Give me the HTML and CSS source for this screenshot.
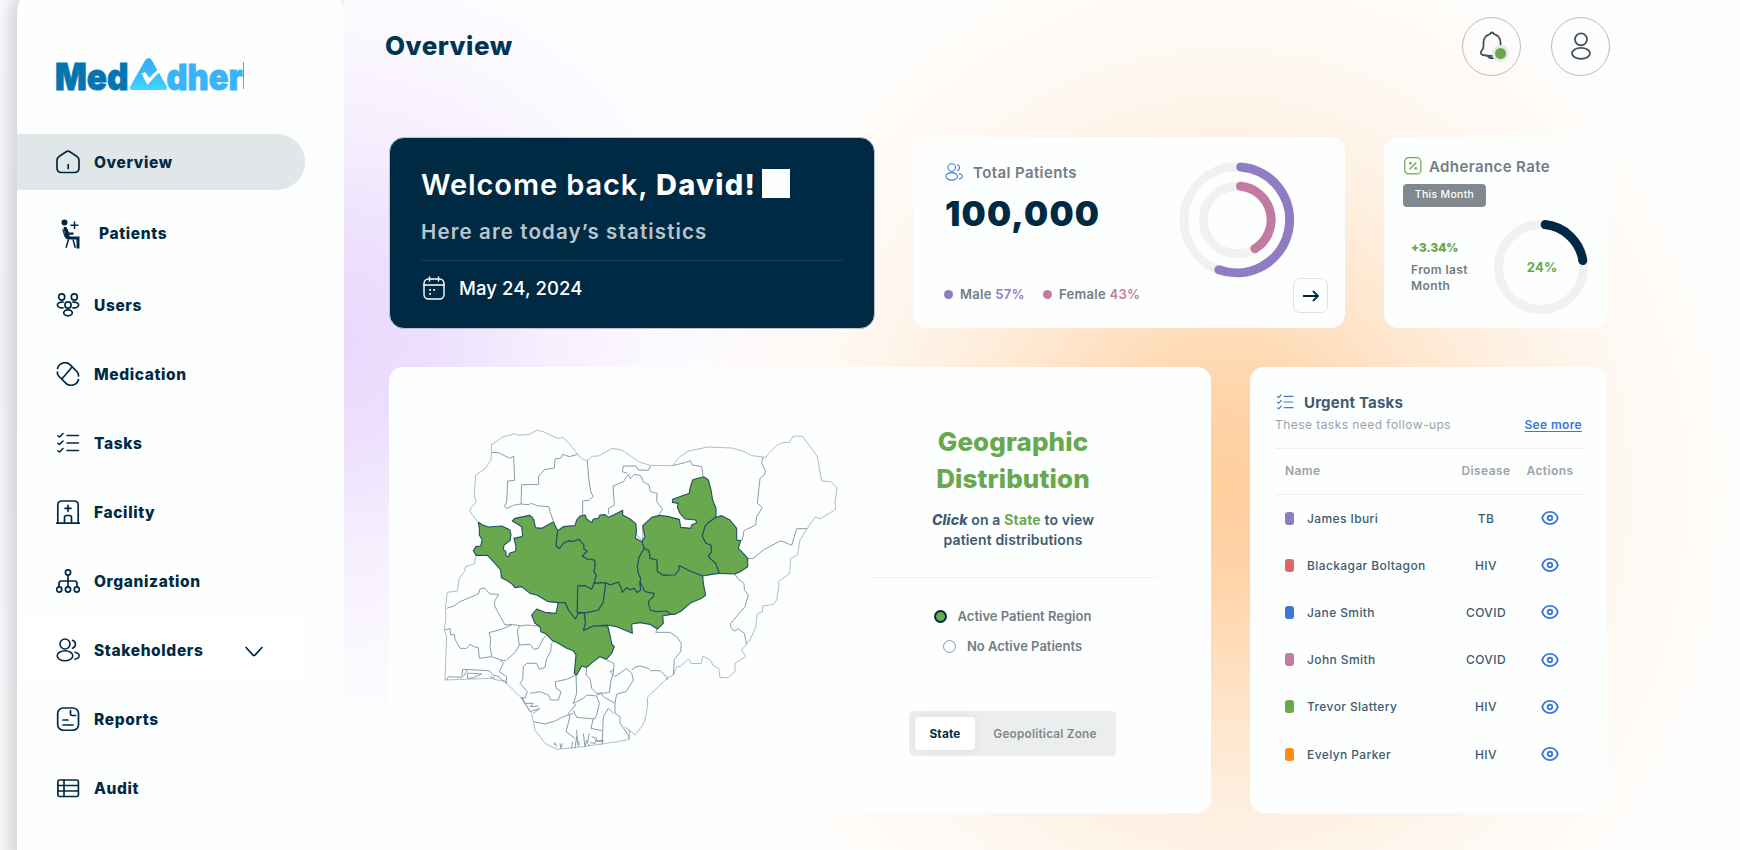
FILE: index.html
```html
<!DOCTYPE html>
<html lang="en">
<head>
<meta charset="utf-8">
<title>MedAdher – Overview</title>
<link rel="stylesheet" href="styles.css">
</head>
<body>
<svg width="0" height="0" class="defs">
  <symbol id="people" viewBox="0 0 24 24"><g fill="none" stroke="currentColor" stroke-linecap="round"><circle cx="9" cy="6" r="5"/><ellipse cx="9" cy="17.8" rx="7.8" ry="5"/><path d="M16.5 2.2a4.2 4.2 0 0 1 0 8M19 14.2c5.500 1.200 5.500 5.800 0 7"/></g></symbol>
  <symbol id="checks" viewBox="0 0 24 24"><g fill="none" stroke="currentColor" stroke-linecap="round" stroke-linejoin="round"><path d="M11 4.500h11.500M11 12h11.500M11 19.500h11.500M2 4.800l1.500 1.200L7 2.500M2 12.300l1.500 1.200L7 10M2 19.800l1.500 1.200L7 17.500"/></g></symbol>
  <symbol id="eye" viewBox="0 0 18 16"><g fill="none" stroke="currentColor" stroke-width="1.900"><path d="M1.200 8C2.500 4 5.500 1.900 9 1.900S15.500 4 16.800 8C15.500 12 12.500 14.100 9 14.100S2.500 12 1.200 8z"/><circle cx="9" cy="8" r="2.200"/></g></symbol>
</svg>
<div class="app">
  <aside class="sidebar">
    <svg class="logo" width="200" height="58" viewBox="-4 -10 200 58">
      <defs><linearGradient id="peak" x1="0" y1="0" x2="0" y2="1"><stop offset="0" stop-color="#36abf3"/><stop offset=".6" stop-color="#3cbdfa"/><stop offset="1" stop-color="#42d8ff"/></linearGradient></defs>
      <text x="-1" y="32.500" font-size="37" textLength="73.500" lengthAdjust="spacingAndGlyphs" class="logo-med">Med</text>
      <path d="M92.500 1q2 0 3.300 2.300L110.500 29q2 4-2 4H76.500q-4 0-2-4L89 3.500Q90.500 1 92.500 1z" fill="url(#peak)"/>
      <path d="M85.500 16.500l3.500-1.500 4.500 6q7-9 17.500-12-10 7.500-19.500 19z" fill="#fff"/>
      <text x="110.500" y="32.500" font-size="36" textLength="76" lengthAdjust="spacingAndGlyphs" class="logo-dher">dher</text>
      <path d="M187.500 5v27" stroke="#6fa3c4"/>
    </svg>
    <nav class="nav">
      <a class="item active"><svg width="24" height="24" viewBox="0 0 24 24"><path class="ln" d="M10.200 1.700 3.300 6.200Q1 7.800 1 10.500V18q0 4.500 4.500 4.500h13Q23 22.500 23 18v-7.500q0-2.700-2.300-4.300l-6.900-4.500q-1.800-1.200-3.600 0zM12.200 14.500v4"/></svg>Overview</a>
      <a class="item patients"><svg width="24" height="30" viewBox="0 0 24 30"><circle cx="8.500" cy="3.500" r="3" fill="#002a43"/><path d="M6.700 10 9 17.500l2 2h5" fill="none" stroke="#002a43" stroke-width="1.200"/><path d="M7.500 8.500q2-1.500 3.500.5l2 4.500h4.500v2.200H13l1 1.800h9.500V29.500h-3v-9H11.500Q10 20 9.500 18z" fill="#002a43"/><path d="M18.500 2.500v7.500M14.500 6.200h8M12.500 20.500 10 28.800M17 20.500l2.300 8.300" stroke="#002a43" stroke-width="1.500" fill="none"/></svg>Patients</a>
      <a class="item"><svg width="24" height="24" viewBox="0 0 24 24"><g class="ln"><ellipse cx="5.700" cy="4" rx="3" ry="3.200"/><ellipse cx="18.300" cy="4" rx="3" ry="3.200"/><circle cx="12" cy="12" r="3.100"/><ellipse cx="12" cy="19.800" rx="4.300" ry="3"/><path d="M7 9.200C-.5 8.500-.5 15.500 7 14.800M17 9.200c7.500-.7 7.500 6.300 0 5.600"/></g></svg>Users</a>
      <a class="item"><svg width="24" height="24" viewBox="0 0 24 24"><g class="ln"><path d="M1.500 6.500C3 .5 10.500-1 14 2.700L21.300 10q1.500 2 1.200 4M22.500 17.500C21 23.500 13.500 25 10 21.300L2.700 14Q1 12 1.500 10M16 5 6.500 16.200"/></g></svg>Medication</a>
      <a class="item"><svg width="24" height="24"><use href="#checks" class="w14"/></svg>Tasks</a>
      <a class="item"><svg width="24" height="24" viewBox="0 0 24 24"><g class="ln"><path d="M.5 23.200h23M1.800 23V5q0-4 4-4h12.400q4 0 4 4v18M8.500 23v-5.500q0-2 2-2h3q2 0 2 2V23M12 5.300v6M9 8.300h6"/></g></svg>Facility</a>
      <a class="item"><svg width="24" height="24" viewBox="0 0 24 24"><g class="ln"><circle cx="12" cy="3.500" r="2.600"/><circle cx="3.200" cy="20.500" r="2.600"/><circle cx="12" cy="20.500" r="2.600"/><circle cx="20.800" cy="20.500" r="2.600"/><path d="M12 6v12M3 18v-3.500Q3 12 5.500 12h13q2.500 0 2.500 2.500V18"/></g></svg>Organization</a>
      <a class="item light"><svg width="24" height="24"><use href="#people" class="w14"/></svg>Stakeholders<svg class="chev" width="18" height="11" viewBox="0 0 18 11"><path class="ln" d="M1 1.500 7.800 8.800q1.200 1.200 2.400 0L17 1.500"/></svg></a>
      <a class="item"><svg width="24" height="24" viewBox="0 0 24 24"><g class="ln"><rect x="1.700" y="1" width="20.800" height="22.300" rx="5.500"/><path d="M14.500 3.500V7q0 1.500 1.500 1.500h3.500M7 13h5M7 18h10"/></g></svg>Reports</a>
      <a class="item"><svg width="24" height="24" viewBox="0 0 24 24"><g class="ln"><rect x="1.900" y="4" width="20.500" height="16.500" rx="1.500"/><path d="M8 4v16.500M2 9.500h20M2 15h20"/></g></svg>Audit</a>
    </nav>
  </aside>

  <main class="main">
    <header class="top">
      <h1>Overview</h1>
      <div class="round"><svg width="28" height="30" viewBox="0 0 28 30"><path class="dk" d="M14 1.500q1.500 0 1.700 1.300C20 4 22.500 7 22.500 11.500V15q0 2.500 1.700 4.500c1.700 2.200 1.300 4-1.200 4.500-6 1.200-12 1.200-18 0-2.500-.5-2.900-2.300-1.200-4.500Q5.500 17.500 5.500 15v-3.500C5.500 7 8 4 12.300 2.800Q12.500 1.500 14 1.500zM9.500 25q4.500 4.500 9 0"/></svg><i class="badge"></i></div>
      <div class="round"><svg width="22" height="30" viewBox="0 0 22 30"><circle class="dk" cx="11" cy="8.300" r="6"/><ellipse class="dk" cx="11" cy="22.300" rx="9" ry="5.500"/></svg></div>
    </header>

    <div class="row one">
      <section class="hero">
        <div class="welcome"><span>Welcome back, </span><b>David!</b><i class="box"></i></div>
        <div class="stats">Here are today’s statistics</div>
        <div class="date"><svg width="22" height="24" viewBox="0 0 22 24"><g fill="none" stroke="#fff" stroke-width="1.400" stroke-linecap="round"><rect x="1" y="3" width="20" height="20" rx="4.500"/><path d="M1 9h20M6.500 1v4M15.500 1v4"/></g><path d="M6.300 13h1.700v1.700H6.300zM10.300 13H12v1.700h-1.700zM6.300 17H8v1.700H6.300z" fill="#fff"/></svg>May 24, 2024</div>
      </section>

      <section class="card total">
        <div class="total-info">
          <div class="label"><svg width="18" height="18"><use href="#people" class="w12"/></svg>Total Patients</div>
          <div class="big">100,000</div>
          <div class="legend"><i class="dot purple"></i><span>Male <em class="c-purple">57%</em></span><i class="dot pink"></i><span>Female <em class="c-pink">43%</em></span></div>
        </div>
        <svg class="rings" width="116" height="116" viewBox="-58 -58 116 116" fill="none" stroke-width="9" stroke-linecap="round">
          <circle r="53" stroke="#f0f1f1"/><circle r="33.700" stroke="#f0f1f1"/>
          <path d="M3.700-53A53 53 0 1 1-18.100 49.800" stroke="#8f7cc3"/>
          <path d="M3.500-33.700A33.700 33.700 0 0 1 17.900 28.700" stroke="#c27ba0"/>
        </svg>
        <div class="go"><svg width="16" height="12" viewBox="0 0 16 12"><path d="M0 6h15M10 1l5 5-5 5" fill="none" stroke="#002a43" stroke-width="1.900"/></svg></div>
      </section>

      <section class="card rate">
        <div class="label"><svg width="18" height="18" viewBox="0 0 18 18"><g fill="none" stroke="#6aa84f" stroke-width="1.200"><rect x=".7" y=".7" width="16.200" height="16.200" rx="4"/><path d="M12.200 5.500 5.600 12.300" stroke-width="1.300"/></g><circle cx="6.300" cy="6.300" r="1.300" fill="#6aa84f"/><circle cx="11.700" cy="11.300" r="1.300" fill="#6aa84f"/></svg>Adherance Rate</div>
        <div class="month">This Month</div>
        <div class="rate-body">
          <div class="delta"><b>+3.34%</b><span>From last<br>Month</span></div>
          <div class="gauge">
            <svg width="94" height="94" viewBox="-47 -47 94 94" fill="none" stroke-width="9"><circle r="42.500" stroke="#f0f1f1"/><path d="M4.200-42.400A42.500 42.500 0 0 1 41.800-6.500" stroke="#002a43" stroke-linecap="round"/></svg>
            <b>24%</b>
          </div>
        </div>
      </section>
    </div>

    <div class="row two">
      <section class="card geo">
        <svg class="map" width="420" height="340" viewBox="0 0 1260 1020">
          <g class="outer">
            <path d="M145 307 120 275 124 262 139 245 133 230 137 165 165 147 183 120 185 72 195 68 215 52 255 41 265 46 298 43 320 31 340 35 382 55 400 53 420 73 443 103 457 118 472 121 487 109 505 108 546 85 575 90 605 110 630 127 662 136 727 137 750 110 775 93 835 81 905 84 940 94 965 107 1007 112 1020 97 1042 75 1058 68 1078 67 1090 48 1118 49 1162 110 1175 183 1203 185 1221 204 1215 245 1217 268 1172 296 1155 292 1130 328 1110 360 1102 405 1082 415 1079 460 1045 485 1047 495 1040 540 1030 553 998 558 997 576 982 580 977 622 960 660 935 690 947 710 915 730 915 755 895 773 870 773 866 745 848 735 843 722 818 708 814 730 783 731 776 717 750 740 740 740 730 765 712 774 690 795 652 832 653 855 645 900 637 917 615 945 598 930M138 406 133 432 107 440 103 455 88 475 82 513 52 517 46 565 48 590 43 630 50 650 45 780 180 775 225 785 270 830 305 880 315 930 345 970 380 988 460 980 560 965 590 960 600 950 598 930"/>
          </g>
          <g class="inner">
            <path d="M185 97 205 98 240 115 251 108 254 181 233 183 230 245 224 258 230 266 250 256 272 252 295 254 305 250 320 257 357 260 360 275 372 308M443 103 418 110 398 103 393 114 375 117 373 144 343 149 326 168 326 193 275 194 273 252M472 121 476 175 482 213 489 230 478 240 458 243 458 285M535 284 536 265 553 255 549 198 580 185 595 163 601 176 612 163 632 167 640 185 657 195 661 215 681 220 680 245 698 268 685 286M662 137 655 151 625 150 618 138 580 138 577 155 592 160M727 137 765 128 780 122 787 135 815 140 820 171M998 112 995 130 1006 152 1003 165 990 175 982 250 997 263 980 290 977 315 942 332 937 360 927 362M953 415 970 415 1000 390 1050 363 1065 367 1085 376 1100 326 1132 326M915 462 922 475 942 490 943 510 955 525 945 560 902 610 902 620 913 634 925 626 943 640 950 672M682 627 677 637 720 637 740 650 754 670 752 695 733 718 730 765M617 310 620 345 637 362 639 345 638 320"/>
            <g transform="translate(0 480)">
              <path d="M50 85 72 78 90 65 145 42 150 27 163 24 180 42 206 43 193 65 195 80 225 135 247 133 270 138 290 135 320 138 330 140M45 150 60 145 62 165 73 163 75 178 90 205 110 205 120 193 132 200 145 203 148 235 185 230 212 240 228 242M185 228 180 200 182 175 177 158 215 148 245 135M270 138 262 150 268 195 255 218 230 240M268 195 300 193 312 208 325 205 340 175 350 165M372 182 364 190 362 215 350 235 345 262 328 268 320 250 290 250 280 260 278 300 270 310 292 335 285 355 275 352M300 340 330 335 355 345 362 360 385 360 393 335 378 325 376 305 410 298 438 285M50 300 55 290 95 292 98 268 178 272 188 285 207 290 215 300 228 305M112 280 113 295 130 293 155 282 130 280zM212 240 220 250 208 275 230 290 228 312M275 352 285 370 310 370 300 380 325 378M275 352 300 395 330 385 310 400M312 425 345 432 375 423 400 410 430 400M438 285 440 340 430 370 437 375 415 400 420 410 408 455 435 475M430 370 460 355 470 345 500 348 508 370 500 405 493 417 440 412 430 390M470 262 468 285 480 295 485 325 500 340 538 338 543 300 550 280 552 250 515 233M552 270 540 275 555 290 590 265 605 280 610 300 588 335 560 342 555 370 520 350 515 340 500 345M555 370 555 400 570 410 570 430 595 465 598 480M535 385 520 410 517 485 495 480M535 385 550 400M490 415 483 445 515 452M605 270 615 262 630 258 655 265 662 272 690 272 710 290 712 300M585 440 600 455"/>
              <path d="M372 495 374 488 380 500M390 490 393 505 397 490M425 505 428 485M435 505 440 470 445 500M440 450 442 480 450 495M460 460 465 500 470 480M478 460 472 490 480 498M485 470 500 475 495 490 480 488M500 485 520 480 515 495M100 290 112 270M180 290 195 295"/>
            </g>
          </g>
          <g class="active-state">
            <path d="M145 307 158 315 175 321 215 318 240 330 243 345 240 362 222 375 220 388 228 395 228 408 236 410 238 400 257 394 258 380 252 355 275 350 278 345 275 320 262 312 247 303 255 295 298 286 305 290 312 300 316 323 335 325 352 316 370 306 383 332 378 378 388 385 400 370 415 362 430 364 447 358 462 375 462 388 472 393 457 408 472 417 494 420 496 435 492 455 499 465 492 490 485 508 465 497 443 498 442 578 452 580 436 597 415 570 405 548 385 548 355 545 320 525 300 520 275 500 255 503 245 491 232 482 214 473 212 450 195 430 172 406 138 406 130 392 138 380 152 378 157 360 148 345 148 325z"/>
            <path d="M383 332 400 320 435 317 440 300 450 288 465 285 470 297 485 308 490 297 505 295 510 285 525 284 535 292 550 285 570 275 578 271 578 285 600 297 617 310 619 330 616 355 636 365 643 385 628 410 622 440 625 460 632 475 630 490 632 510 622 518 612 505 600 510 590 503 577 518 572 500 565 487 540 495 527 488 492 490 499 465 492 455 496 435 494 420 472 417 457 408 472 393 462 388 462 375 447 358 430 364 415 362 400 370 388 385 378 378z"/>
            <path d="M636 365 645 350 638 318 648 308 665 292 690 286 715 290 735 295 748 298 752 322 782 325 785 315 800 308 797 300 765 297 750 280 742 262 745 250 727 247 728 238 778 220 780 205 788 180 805 174 822 171 835 180 843 210 848 240 858 265 858 292 835 308 825 320 817 348 828 370 843 375 845 395 835 410 857 430 868 460 845 463 818 468 785 455 748 437 747 450 735 465 700 466 682 455 680 420 660 415 657 392 643 385z"/>
            <path d="M858 292 875 287 900 300 920 325 920 360 932 362 925 385 940 400 953 415 953 440 930 455 915 462 868 460 857 430 835 410 845 395 843 375 828 370 817 348 825 320 835 308z"/>
            <path d="M643 385 657 392 660 415 680 420 682 455 700 466 735 465 747 450 748 437 785 455 818 468 820 490 827 525 815 535 783 548 755 572 735 583 722 583 698 588 700 610 682 627 660 613 630 608 605 612 607 640 560 620 532 615 490 618 460 632 466 610 463 578 505 570 520 545 527 488 540 495 565 487 572 500 577 518 590 503 600 510 612 505 622 518 632 510 630 490 632 475 625 460 622 440 628 410z"/>
            <path d="M630 485 645 515 672 520 670 530 655 545 660 570 680 575 710 573 722 583" fill="none"/>
            <path d="M443 498 465 497 485 508 492 490 527 488 520 545 505 570 470 578 442 578z"/>
            <path d="M305 585 320 567 345 577 378 580 385 548 405 548 415 570 436 597 445 580 463 578 466 610 460 632 490 618 533 617 540 645 545 672 553 680 545 700 530 717 510 710 490 725 470 742 455 738 440 765 433 760 438 705 430 692 410 685 385 670 365 660 350 643 333 635 330 620 315 610z"/>
          </g>
        </svg>
        <div class="geo-info">
          <h2>Geographic<br>Distribution</h2>
          <p><b>Click</b> on a <em>State</em> to view<br>patient distributions</p>
          <div class="key first"><i class="on"></i>Active Patient Region</div>
          <div class="key"><i></i>No Active Patients</div>
          <div class="switch"><span class="sel">State</span><span>Geopolitical Zone</span></div>
        </div>
      </section>

      <section class="card tasks">
        <div class="tasks-title"><svg width="18" height="18"><use href="#checks" class="w14"/></svg>Urgent Tasks</div>
        <div class="tasks-sub"><span>These tasks need follow-ups</span><a>See more</a></div>
        <div class="tr th"><span>Name</span><span>Disease</span><span>Actions</span></div>
        <div class="tr"><span class="who"><i style="background:#8e7cc3"></i>James Iburi</span><span>TB</span><span><svg width="18" height="16"><use href="#eye"/></svg></span></div>
        <div class="tr"><span class="who"><i style="background:#e06666"></i>Blackagar Boltagon</span><span>HIV</span><span><svg width="18" height="16"><use href="#eye"/></svg></span></div>
        <div class="tr"><span class="who"><i style="background:#3c78d8"></i>Jane Smith</span><span>COVID</span><span><svg width="18" height="16"><use href="#eye"/></svg></span></div>
        <div class="tr"><span class="who"><i style="background:#c27ba0"></i>John Smith</span><span>COVID</span><span><svg width="18" height="16"><use href="#eye"/></svg></span></div>
        <div class="tr"><span class="who"><i style="background:#6aa84f"></i>Trevor Slattery</span><span>HIV</span><span><svg width="18" height="16"><use href="#eye"/></svg></span></div>
        <div class="tr"><span class="who"><i style="background:#ff8c12"></i>Evelyn Parker</span><span>HIV</span><span><svg width="18" height="16"><use href="#eye"/></svg></span></div>
      </section>
    </div>
  </main>
</div>
</body>
</html>
```

FILE: styles.css
```css
* { box-sizing: border-box; }
body {
  margin: 0;
  width: 1740px;
  height: 850px;
  overflow: hidden;
  font-family: Inter, "Open Sans", sans-serif;
  color: #002a43;
  background:
    radial-gradient(ellipse 550px 600px at 1225px 490px, rgba(255,205,155,1) 0, rgba(255,209,163,.92) 16%, rgba(255,216,177,.72) 34%, rgba(255,226,198,.5) 55%, rgba(255,238,222,.3) 76%, rgba(255,255,255,0) 100%),
    radial-gradient(ellipse 480px 470px at 330px 340px, #e8d9fd 0, #ecdffd 20%, rgba(243,234,254,.75) 45%, rgba(250,245,255,.45) 72%, rgba(255,255,255,0) 100%),
    #fefefe;
}
h1, h2, p { margin: 0; }
i, em { font-style: normal; }
svg { display: block; flex: none; }
.defs { position: absolute; }
.ln { fill: none; stroke: #002a43; stroke-width: 1.7; stroke-linecap: round; stroke-linejoin: round; }
.dk { fill: none; stroke: #40525f; stroke-width: 1.8; stroke-linecap: round; }
.w14 { stroke-width: 1.6; }
.w12 { stroke-width: 1.4; }

.app { display: flex; height: 850px; padding-left: 17px; }
.sidebar {
  width: 327px;
  height: 900px;
  margin-top: -12px;
  padding-top: 59px;
  background: #fdfefe;
  border-radius: 24px;
  box-shadow: -6px 0 22px rgba(60,50,80,.26);
  clip-path: inset(0 0 0 -20px);
}
.logo { margin-left: 35px; font-weight: 900; }
.logo-med { fill: #0475b0; stroke: #0475b0; stroke-width: .8; }
.logo-dher { fill: #3ab3f9; stroke: #3ab3f9; stroke-width: .8; }
.nav { display: flex; flex-direction: column; gap: 13px; margin-top: 29px; width: 288px; }
.item {
  display: flex; align-items: center; gap: 14px; height: 56px; padding: 0 0 0 39px;
  font-weight: 800; font-size: 15.5px; letter-spacing: .63px; line-height: 19px; color: #002a43;
}
.active { background: #e1e6e8; border-radius: 0 28px 28px 0; }
.patients { height: 61px; gap: 19px; }
.light { background: #fff; }
.chev { margin-left: 28px; margin-top: 2px; }

.main { padding-left: 45px; width: 1263px; }
.top { display: flex; align-items: center; height: 92px; margin-bottom: 45px; }
.top h1 { font-size: 26px; font-weight: 800; letter-spacing: .5px; color: #003553; margin: -2px auto 0 -4px; }
.round {
  position: relative; display: flex; align-items: center; justify-content: center;
  width: 59px; height: 59px; border: 1px solid #b6bdc2; border-radius: 50%;
}
.round + .round { margin-left: 30px; margin-right: -3px; }
.badge {
  position: absolute; left: 29px; top: 27px; width: 17px; height: 17px; border-radius: 50%;
  background: #6aa84f; border: 3px solid #e4e9ed;
}
.row { display: flex; gap: 39px; }
.one { height: 191px; }
.two { height: 446px; margin-top: 39px; }
.card { background: #fdfefe; border-radius: 14px; }

.hero {
  width: 486px; height: 192px; margin: -.5px -1px 0 0; border: 1px solid #b9c3c9; border-radius: 15px; background: #002a43; color: #fff;
  padding: 27px 31px 0;
}
.welcome { display: flex; align-items: center; height: 40px; font-size: 29px; font-weight: 600; letter-spacing: .9px; white-space: pre; }
.welcome b { font-weight: 800; letter-spacing: 1.3px; }
.box { width: 28px; height: 29px; margin: -3px 0 0 6px; background: #fdfefe; }
.stats { margin-top: 12px; height: 44px; line-height: 30px; font-size: 20.5px; font-weight: 600; letter-spacing: 1.13px; color: #bac5cc; border-bottom: 1px solid #193f56; }
.date { display: flex; align-items: center; gap: 14px; height: 30px; margin-top: 12px; padding-left: 2px; font-size: 18.5px; font-weight: 500; letter-spacing: .1px; }

.total { width: 432px; display: flex; padding: 24px 0 0 32px; }
.total-info { width: 235px; }
.label { display: flex; align-items: center; height: 24px; gap: 10px; color: #727d84; font-size: 15px; font-weight: 600; letter-spacing: .4px; }
.total .label { margin-top: -1px; }
.total .label svg { color: #3c78d8; }
.big { margin-top: 10px; line-height: 40px; font-size: 34px; font-weight: 900; letter-spacing: 1.2px; }
.legend { display: flex; align-items: center; margin: 50px 0 0 -1px; height: 20px; font-size: 13px; font-weight: 600; letter-spacing: .3px; color: #727d84; white-space: nowrap; }
.dot { width: 9px; height: 9px; border-radius: 50%; margin-right: 7px; }
.legend span + .dot { margin-left: 18px; }
.purple { background: #8f7cc3; }
.pink { background: #c27ba0; }
.c-purple { color: #8f7cc3; }
.c-pink { color: #c27ba0; }
.rings { margin: 1px 0 0 -1px; }
.go { align-self: flex-start; margin: 117px 0 0 -2px; width: 35px; height: 35px; border: 1.500px solid #dfe3e8; border-radius: 7px; background: #fdfefe; display: flex; align-items: center; justify-content: center; }

.rate { width: 223px; padding: 17px 0 0 19px; }
.rate .label { gap: 7px; padding-left: 1px; }
.month { margin-top: 6px; width: 83px; height: 23px; border-radius: 4px; background: #81898e; color: #fff; font-size: 10.5px; font-weight: 500; letter-spacing: .3px; line-height: 22px; text-align: center; }
.rate-body { display: flex; margin-top: 13px; padding-left: 8px; }
.delta { width: 83px; padding-top: 20px; color: #727d84; font-size: 12px; font-weight: 600; letter-spacing: .4px; }
.delta b { display: block; line-height: 16px; color: #6aa84f; font-size: 11.5px; margin-bottom: 6px; letter-spacing: 0; }
.delta span { display: block; line-height: 15.500px; }
.gauge { display: grid; place-items: center; }
.gauge > * { grid-area: 1 / 1; }
.gauge b { color: #6aa84f; font-size: 13px; letter-spacing: .2px; padding-left: 2px; }

.geo { width: 822px; display: flex; padding: 53px 0 0 41px; }
.outer path { fill: none; stroke: #aebdca; stroke-width: 3; stroke-linejoin: round; }
.inner path { fill: none; stroke: #869eae; stroke-width: 3; stroke-linejoin: round; }
.active-state path { fill: #6aa84f; stroke: #1f5363; stroke-width: 3.4; stroke-linejoin: round; }
.active-state path[fill="none"] { fill: none; }
.geo-info { width: 288px; margin-left: 19px; padding-top: 4px; display: flex; flex-direction: column; align-items: center; text-align: center; }
.geo-info h2 { font-size: 26px; font-weight: 800; line-height: 36.500px; color: #6aa84f; letter-spacing: .1px; }
.geo-info p { width: 288px; height: 68px; margin-top: 13px; border-bottom: 1px solid #eef0f0; font-size: 14px; line-height: 19.500px; font-weight: 600; color: #3d5c72; letter-spacing: .15px; }
.geo-info p b { font-style: italic; font-weight: 800; }
.geo-info p em { color: #6aa84f; font-weight: 700; }
.key { display: flex; align-items: center; gap: 11px; height: 30px; margin-left: -1px; font-size: 13px; font-weight: 600; color: #727d84; letter-spacing: 0; }
.key i { width: 13px; height: 13px; border-radius: 50%; border: 1.5px solid #7d98ac; }
.key .on { background: #6aa84f; border: 2px solid #002a43; }
.first { margin-top: 23px; }
.switch { display: flex; margin: 50px 0 0 -1px; width: 207px; height: 45px; padding: 6px; border-radius: 5px; background: #eceeee; font-size: 11.8px; font-weight: 600; color: #7f888e; line-height: 34px; }
.switch span { flex: 1; letter-spacing: .2px; padding-left: 5px; }
.switch .sel { flex: none; width: 60px; height: 33px; padding: 0; border-radius: 4px; background: #fff; color: #002a43; font-weight: 700; box-shadow: 0 0 10px rgba(0,0,0,.06); }

.tasks { width: 357px; padding: 24px 25px 0; }
.tasks-title { display: flex; align-items: center; gap: 10px; height: 22px; padding-left: 1px; color: #3d5c72; font-size: 15px; font-weight: 700; letter-spacing: .2px; }
.tasks-title svg { color: #3c78d8; }
.tasks-sub { display: flex; justify-content: space-between; height: 36px; padding: 1px 0 0; border-bottom: 1px solid #eceeef; line-height: 22px; font-size: 12px; letter-spacing: .45px; color: #9ba3a8; }
.tasks-sub a { color: #3c78d8; font-weight: 600; text-decoration: underline; text-underline-offset: 2px; letter-spacing: .35px; }
.tr { display: grid; grid-template-columns: 167px 68px 60px; align-items: center; height: 47.200px; padding-left: 10px; font-size: 12px; font-weight: 500; color: #3d5c72; letter-spacing: .4px; text-align: center; }
.th { height: 46px; padding-bottom: 2px; border-bottom: 1px solid #eceeef; font-weight: 600; color: #9ba3a8; }
.tr:not(.th) { padding-bottom: 1px; }
.tr > :first-child { text-align: left; }
.who { display: flex; align-items: center; }
.who i { width: 9px; height: 13px; border-radius: 3px; margin-right: 13px; }
.tr svg { margin: 0 auto; color: #3c78d8; }
```
